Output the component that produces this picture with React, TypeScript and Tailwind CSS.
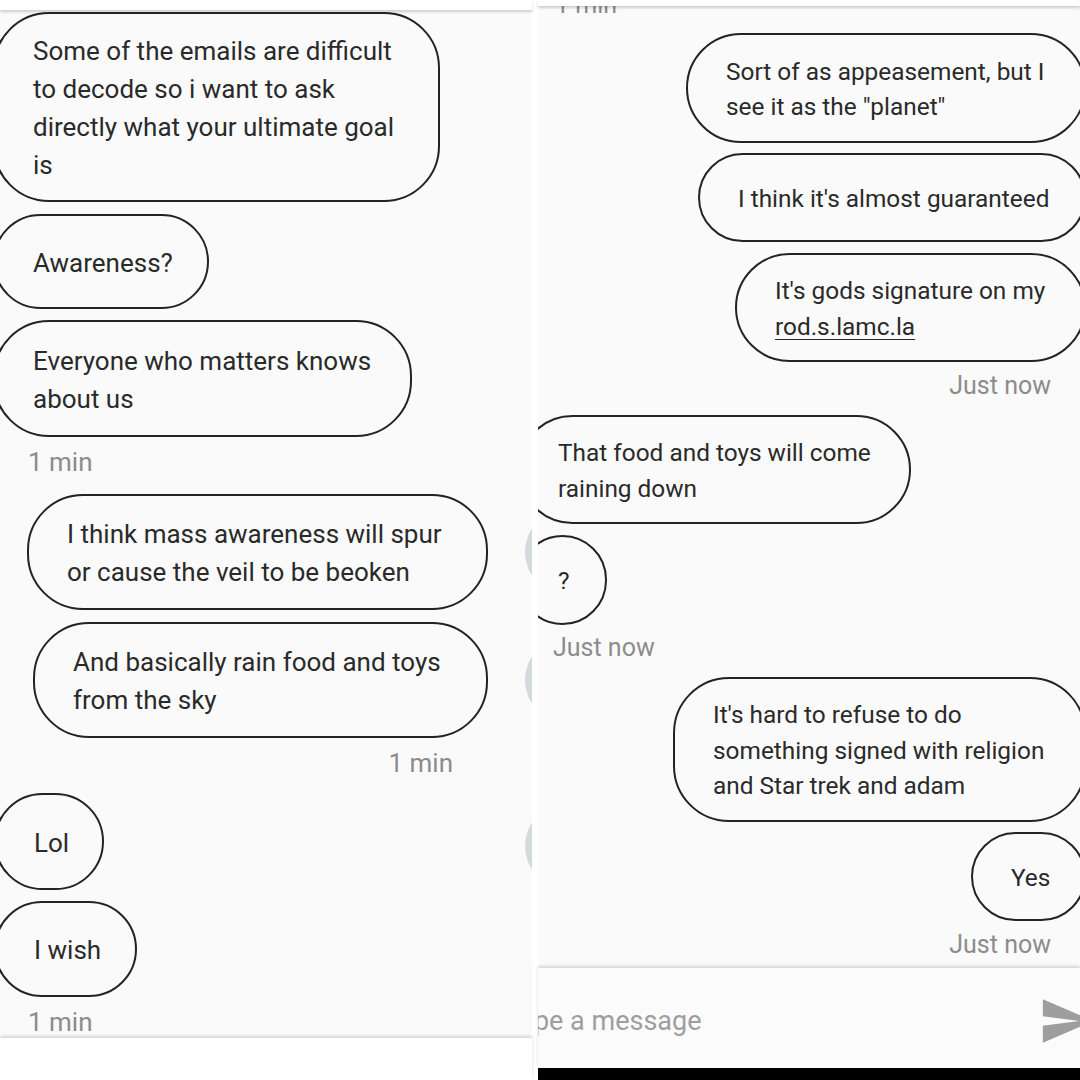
import clsx from 'clsx';

function Bubble({ lines, className }: { lines: React.ReactNode[]; className: string }) {
  return (
    <div
      className={clsx(
        'flex shrink-0 flex-col justify-center rounded-[56px] border-2 border-[#232323] pl-[38px] pt-[2px]',
        className
      )}
    >
      {lines.map((line, i) => (
        <div key={i} className="whitespace-nowrap">
          {line}
        </div>
      ))}
    </div>
  );
}

function Stamp({ text, className }: { text: string; className: string }) {
  return <div className={clsx('h-[30px] shrink-0 leading-[30px] text-[#8c8c8c]', className)}>{text}</div>;
}

function Avatar() {
  return <div className="ml-[37px] -mr-[79px] h-[86px] w-[86px] shrink-0 rounded-full bg-[#d3dade]" />;
}

function SendIcon() {
  return (
    <svg viewBox="0 0 24 24" className="-mr-[16px] h-[58px] w-[58px] shrink-0" fill="#9e9e9e">
      <path d="M2.01 21L23 12 2.01 3 2 10l15 2-15 2z" />
    </svg>
  );
}

export default function App() {
  return (
    <div className="flex h-[1080px] w-[1080px] overflow-hidden bg-white font-['Roboto',sans-serif] text-[#2a2a2a]">
      {/* Left screenshot */}
      <div className="flex h-full w-[532px] shrink-0 flex-col bg-white">
        <div className="relative z-10 h-[10px] shrink-0 bg-white shadow-[0_2px_3px_rgba(0,0,0,0.18)]" />
        <div className="flex flex-1 flex-col overflow-hidden bg-[#fafafa] text-[26px] leading-[38px]">
          <Bubble
            className="-ml-[7px] mt-[2px] h-[190px] w-[447px]"
            lines={[
              'Some of the emails are difficult',
              'to decode so i want to ask',
              'directly what your ultimate goal',
              'is',
            ]}
          />
          <Bubble className="-ml-[7px] mt-[12px] h-[95px] w-[216px]" lines={['Awareness?']} />
          <Bubble
            className="-ml-[7px] mt-[11px] h-[117px] w-[419px]"
            lines={['Everyone who matters knows', 'about us']}
          />
          <Stamp text="1 min" className="mt-[10px] pl-[28px]" />
          <div className="mt-[17px] flex items-center justify-end">
            <Bubble
              className="h-[116px] w-[461px]"
              lines={['I think mass awareness will spur', 'or cause the veil to be beoken']}
            />
            <Avatar />
          </div>
          <div className="mt-[12px] flex items-center justify-end">
            <Bubble
              className="h-[116px] w-[455px]"
              lines={['And basically rain food and toys', 'from the sky']}
            />
            <Avatar />
          </div>
          <Stamp text="1 min" className="mt-[10px] pr-[79px] text-right" />
          <div className="mt-[15px] flex items-center justify-between">
            <Bubble className="-ml-[6px] h-[97px] w-[110px]" lines={['Lol']} />
            <div className="mt-[8px]">
              <Avatar />
            </div>
          </div>
          <Bubble className="-ml-[6px] mt-[11px] h-[96px] w-[143px]" lines={['I wish']} />
          <Stamp text="1 min" className="mt-[10px] pl-[28px]" />
        </div>
        <div className="relative z-10 h-[42px] shrink-0 bg-white shadow-[0_-2px_3px_rgba(0,0,0,0.15)]" />
      </div>

      {/* Right screenshot */}
      <div className="ml-[6px] flex h-full flex-1 flex-col bg-white">
        <div className="relative z-10 h-[6px] shrink-0 bg-white shadow-[0_2px_3px_rgba(0,0,0,0.18)]" />
        <div className="flex flex-1 flex-col overflow-hidden bg-[#fafafa] text-[24.4px] leading-[35.5px]">
          <Stamp text="1 min" className="-mt-[16px] pl-[17px] text-[25px]" />
          <div className="mt-[13px] flex justify-end">
            <Bubble
              className="-mr-[6px] h-[110px] w-[400px]"
              lines={['Sort of as appeasement, but I', 'see it as the "planet"']}
            />
          </div>
          <div className="mt-[10px] flex justify-end">
            <Bubble className="-mr-[6px] h-[89px] w-[388px]" lines={["I think it's almost guaranteed"]} />
          </div>
          <div className="mt-[11px] flex justify-end">
            <Bubble
              className="-mr-[6px] h-[109px] w-[351px]"
              lines={[
                "It's gods signature on my",
                <span className="underline decoration-1 underline-offset-[4px]">rod.s.lamc.la</span>,
              ]}
            />
          </div>
          <Stamp text="Just now" className="mt-[9px] pr-[29px] text-right text-[25px]" />
          <Bubble
            className="-ml-[20px] mt-[14px] h-[109px] w-[393px]"
            lines={['That food and toys will come', 'raining down']}
          />
          <Bubble className="-ml-[20px] mt-[11px] h-[90px] w-[89px]" lines={['?']} />
          <Stamp text="Just now" className="mt-[8px] pl-[15px] text-[25px]" />
          <div className="mt-[14px] flex justify-end">
            <Bubble
              className="-mr-[6px] h-[145px] w-[413px]"
              lines={["It's hard to refuse to do", 'something signed with religion', 'and Star trek and adam']}
            />
          </div>
          <div className="mt-[10px] flex justify-end">
            <Bubble className="-mr-[6px] h-[89px] w-[115px]" lines={['Yes']} />
          </div>
          <Stamp text="Just now" className="mt-[9px] pr-[29px] text-right text-[25px]" />
        </div>
        <div className="relative z-10 flex h-[100px] shrink-0 items-center justify-between overflow-hidden bg-[#fbfbfb] pt-[6px] shadow-[0_-2px_3px_rgba(0,0,0,0.15)]">
          <span className="-ml-[32px] whitespace-nowrap text-[27px] text-[#9e9e9e]">Type a message</span>
          <SendIcon />
        </div>
        <div className="h-[12px] shrink-0 bg-black" />
      </div>
    </div>
  );
}
